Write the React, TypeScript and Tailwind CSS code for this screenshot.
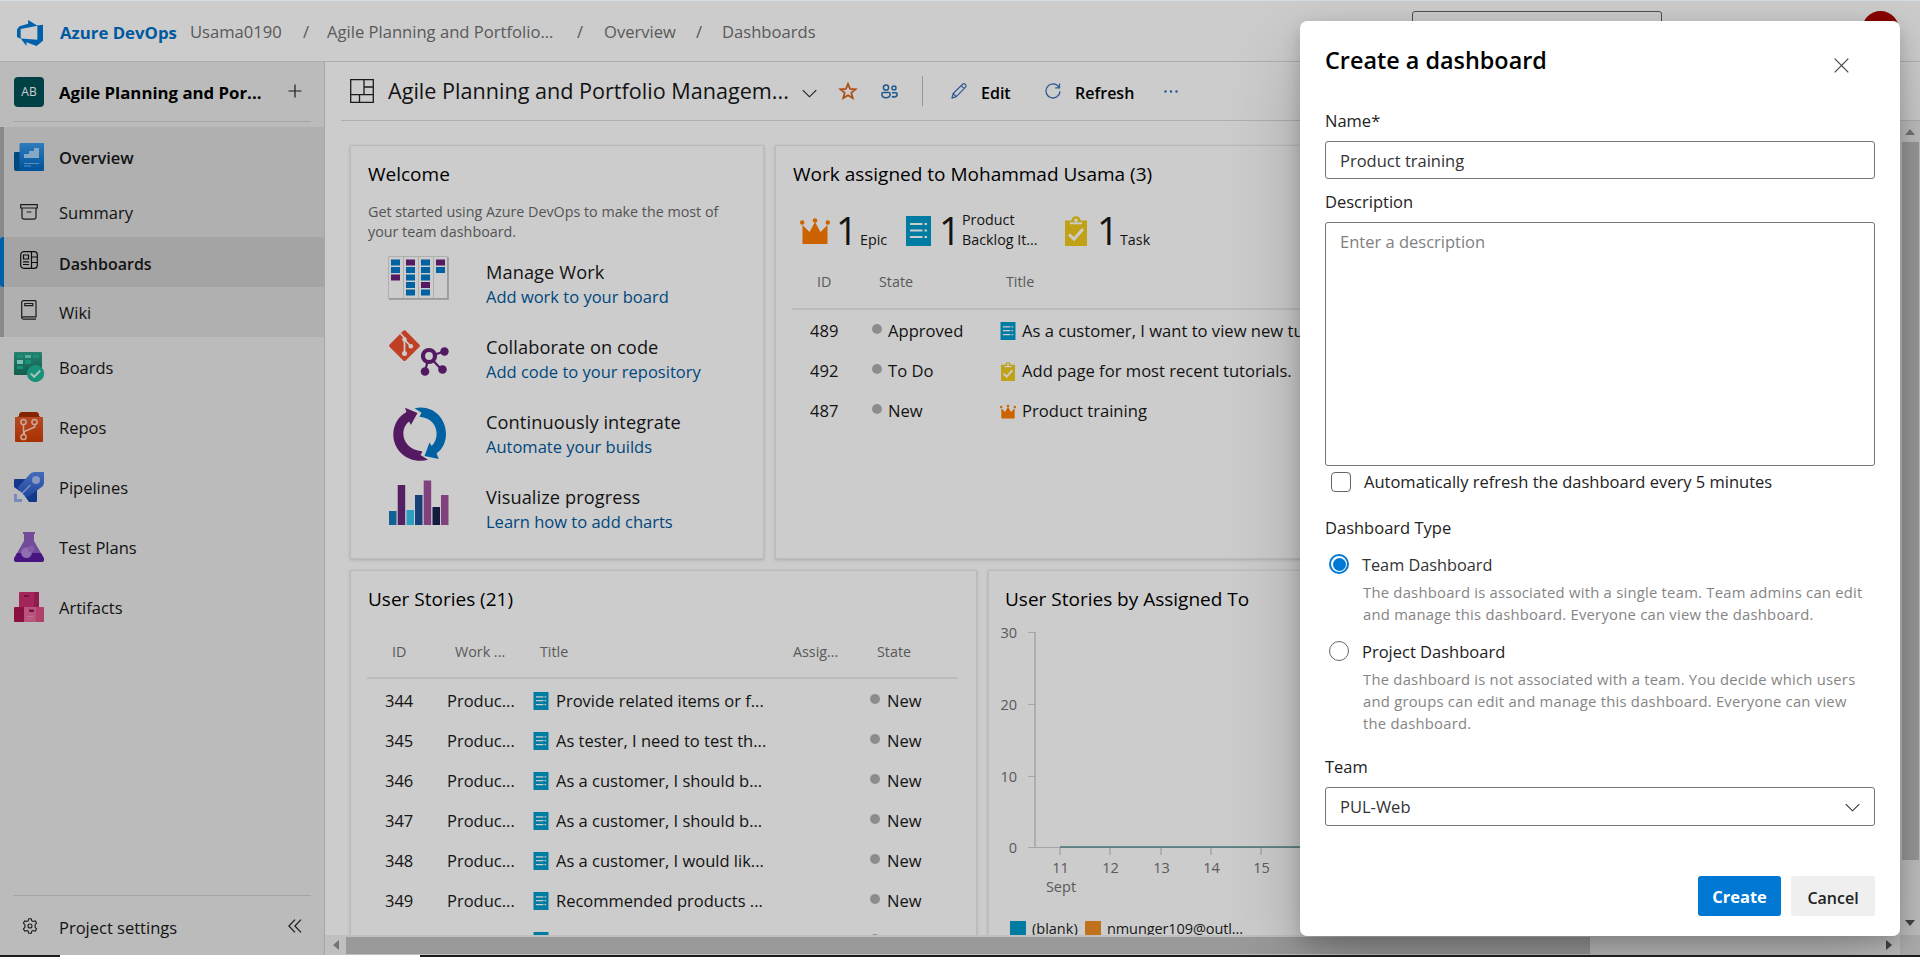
import React from "react";

type IconProps = { className?: string };

const Logo = () => (
  <svg viewBox="1 1 14 14" className="h-[26px] w-[26px] fill-[#0078d4]">
    <path d="M15 3.622v8.512L11.5 15l-5.425-1.975v1.958L3.004 10.97l8.951.7V4.005L15 3.622zm-2.984.428L6.994 1v2.001L2.382 4.356 1 6.13v4.029l1.978.873V5.869l9.038-1.818z" />
  </svg>
);

const PlusIcon = () => (
  <svg viewBox="0 0 14 14" className="-mt-[2px] h-[14px] w-[14px] stroke-[#222]" fill="none" strokeWidth="1.2">
    <path d="M7 .5v13M.5 7h13" />
  </svg>
);

const OverviewIcon = () => (
  <svg viewBox="0 0 30 28" className="h-7 w-[30px]">
    <defs>
      <linearGradient id="ov" x1="0" y1="0" x2="0" y2="1">
        <stop offset="0" stopColor="#3a9bef" />
        <stop offset="1" stopColor="#0066c0" />
      </linearGradient>
    </defs>
    <path d="M1 9h5v19H2a2 2 0 0 1-2-2V10a1 1 0 0 1 1-1z" fill="#005ba1" />
    <path d="M6 0h23a1 1 0 0 1 1 1v26a1 1 0 0 1-1 1H4c1 0 1.500-.7 1.500-1.500V1z" fill="url(#ov)" />
    <path d="M10 15v-4h5V8h5V5h5v10z" fill="#a9d3f5" />
    <path d="M10 20.500h15M10 23h7" stroke="#6db5ef" strokeWidth="1.200" />
  </svg>
);

const BoardsIcon = () => (
  <svg viewBox="0 0 30 30" className="h-[30px] w-[30px]">
    <defs>
      <linearGradient id="bd" x1="0" y1="0" x2="0" y2="1">
        <stop offset="0" stopColor="#2fa28b" />
        <stop offset="1" stopColor="#197560" />
      </linearGradient>
    </defs>
    <rect width="28" height="23" rx="1" fill="url(#bd)" />
    <path d="M3 3h6v3H3zM19 3h6v3h-6zM11 8h6v4h-6zM3 14h6v3H3z" fill="#22b596" />
    <path d="M11 3h6v3h-6z" fill="#68dcc5" />
    <path d="M3 8h6v4H3z" fill="#98f2df" />
    <circle cx="21.500" cy="21.500" r="8.600" fill="#1fb698" />
    <path d="M16.800 21.500l3.400 3.300 6-6" fill="none" stroke="#c8f5ea" strokeWidth="2.200" />
  </svg>
);

const ReposIcon = () => (
  <svg viewBox="0 0 30 30" className="h-[30px] w-[30px]">
    <defs>
      <linearGradient id="rp" x1="0" y1="0" x2="0" y2="1">
        <stop offset="0" stopColor="#e55b2c" />
        <stop offset="1" stopColor="#d33c00" />
      </linearGradient>
    </defs>
    <path d="M7 0h16l2 2v2l3 2H2l3-2V2z" fill="#a52f00" />
    <path d="M1 5h28v24a1 1 0 0 1-1 1H2a1 1 0 0 1-1-1z" fill="url(#rp)" />
    <g fill="none" stroke="#ffd0bd" strokeWidth="1.500">
      <circle cx="9.500" cy="10" r="2.600" />
      <circle cx="20.500" cy="10" r="2.600" />
      <circle cx="9.500" cy="25" r="2.600" />
      <path d="M9.500 12.600v9.800M20.800 12.600v2.400l-10.500 4.500v3" />
    </g>
  </svg>
);

const PipelinesIcon = () => (
  <svg viewBox="0 0 30 30" className="h-[30px] w-[30px]">
    <defs>
      <linearGradient id="pl" x1="0" y1="0" x2="0" y2="1">
        <stop offset="0" stopColor="#5687e8" />
        <stop offset="1" stopColor="#2a59c4" />
      </linearGradient>
    </defs>
    <path d="M0 8q0-1 1-1h12L7 20l-7-5zM23 14v15q0 1-1 1h-7l-5-7z" fill="#1746ac" />
    <path d="M17 1l3-1h10v11l-1 3-15 11-4-1-5-5-1-4z" fill="url(#pl)" />
    <circle cx="22" cy="8" r="4" fill="#a9bff3" />
    <path d="M7 22.500l9.500-9.500" stroke="#9db8f3" strokeWidth="1.500" />
    <path d="M0 22h3v5h5v3H0z" fill="#93aee8" />
    <path d="M6 19l5 5-2 2-2-1-1 2-3-3 2-1-1-2z" fill="#e4e9f5" />
  </svg>
);

const TestPlansIcon = () => (
  <svg viewBox="0 0 30 30" className="h-[30px] w-[30px]">
    <path d="M9 0h12v2h-1v7l3.500 6 6 10.500C31 28 30 30 27.500 30h-25C0 30-1 28 .5 25.500L6.500 15 10 9V2H9V0z" fill="#8f60c0" />
    <path d="M3 21h24l2.700 5c1 2.200 0 4-2.200 4h-25C.3 30-.7 28.200.3 26z" fill="#5b1ba0" />
    <circle cx="12.500" cy="20.700" r="5.300" fill="#b58bdc" />
    <circle cx="17" cy="17" r="3.200" fill="#a373d0" />
  </svg>
);

const ArtifactsIcon = () => (
  <svg viewBox="0 0 30 30" className="h-[30px] w-[30px]">
    <path d="M5 1q0-1 1-1h18q1 0 1 1v14H5z" fill="#cb3070" />
    <path d="M20 0h4q1 0 1 1v14h-5z" fill="#b32460" />
    <path d="M10 3h5v2h-5z" fill="#94154c" />
    <path d="M0 16q0-1 1-1h9v15H1q-1 0-1-1z" fill="#b0154f" />
    <path d="M10 15h19q1 0 1 1v13q0 1-1 1H10z" fill="#e8699c" />
    <path d="M22 15h7q1 0 1 1v13q0 1-1 1h-7z" fill="#dd5289" />
    <path d="M5 17.500h4.500v2.500H5zM15 17.500h5v2.500h-5z" fill="#9c1550" />
    <path d="M12.500 24.500h7M12.500 27h5" stroke="#f08cb4" />
  </svg>
);

const SummaryIcon = () => (
  <svg viewBox="0 0 18 16" className="h-4 w-[18px] stroke-[#222]" fill="none" strokeWidth="1.2">
    <path d="M.7.7h16.600v3.300H.7zM2 4v9q0 2.200 2.200 2.200h9.600q2.200 0 2.200-2.200V4M6.700 8h4.600" />
  </svg>
);

const DashboardsIcon = () => (
  <svg viewBox="0 0 18 18" className="-mt-1 h-[18px] w-[18px] stroke-[#111]" fill="none" strokeWidth="1.2">
    <rect x=".7" y=".7" width="16.600" height="16.600" rx="3" />
    <path d="M11.500.7v16.600M11.500 6h6M11.500 11.500h6M3.500 4h5v4h-5zM3 10.800h6M3 13.500h6" />
  </svg>
);

const WikiIcon = () => (
  <svg viewBox="0 0 18 20" className="-mt-1 h-5 w-[18px] stroke-[#222]" fill="none" strokeWidth="1.2">
    <path d="M16 .7H3.500q-1.800 0-1.800 1.800v14.800q0 1.800 1.800 1.800H16M16 .7v16.200H3.500q-1.800 0-1.800 1.200M4.800 3.500h8v2.200h-8z" />
  </svg>
);

const GearIcon = () => (
  <svg viewBox="0 0 16 16" className="h-4 w-4 stroke-[#222]" fill="none" strokeWidth="1.1" strokeLinejoin="round">
    <circle cx="8" cy="8" r="2" />
    <path d="M6.700.7h2.600l.4 2 1.500.8 2-.7 1.400 2.300-1.500 1.500v2.800l1.500 1.500-1.400 2.300-2-.7-1.500.8-.4 2H6.700l-.4-2-1.500-.8-2 .7-1.400-2.300 1.500-1.500V6.600L1.400 5.100l1.400-2.300 2 .7 1.500-.8z" />
  </svg>
);

const CollapseIcon = () => (
  <svg viewBox="0 0 14 14" className="h-[14px] w-[14px] stroke-[#222]" fill="none" strokeWidth="1.2">
    <path d="M7 .7L.9 7 7 13.300M13 .7L6.900 7l6.100 6.300" />
  </svg>
);

const GridIcon = () => (
  <svg viewBox="0 0 24 24" className="h-6 w-6 stroke-[#222]" fill="none" strokeWidth="1.3">
    <path d="M.7.7h22.600v22.600H.7zM14 .7v15M.7 15.700h22.600M14 8h9.300M9.500 15.700v7.600" />
  </svg>
);

const ChevronDown = ({ className }: IconProps) => (
  <svg viewBox="0 0 16 9" className={className} fill="none" stroke="currentColor" strokeWidth="1.2">
    <path d="M.8.8L8 8 15.200.8" />
  </svg>
);

const StarIcon = () => (
  <svg viewBox="0 0 20 19" className="h-[18px] w-5 stroke-[#d9661f]" fill="none" strokeWidth="1.9" strokeLinejoin="miter">
    <path d="M10 2l2.200 5.300 5.800.4-4.500 3.700 1.500 5.600L10 14l-5 3 1.500-5.600L2 7.700l5.800-.4z" />
  </svg>
);

const UsersIcon = () => (
  <svg viewBox="0 0 17 15" className="h-[15px] w-[17px] stroke-[#2a6fb0]" fill="none" strokeWidth="1.5">
    <circle cx="5" cy="3.500" r="2.600" />
    <circle cx="13" cy="4" r="2" />
    <path d="M2.200 8.500h5.600q1.400 0 1.400 1.500 0 3.700-4.200 3.700T.8 10q0-1.500 1.400-1.500zM11 8.700h4q1.200 0 1.200 1.300 0 2.800-3 3-1.400 0-2.400-.5" />
  </svg>
);

const PencilIcon = () => (
  <svg viewBox="0 0 16 16" className="h-4 w-4 stroke-[#3b70b8]" fill="none" strokeWidth="1.2" strokeLinejoin="round">
    <path d="M.9 15.100l1.300-4.600L11.600 1.200q1.500-1.100 2.700.1t.2 2.800L5.300 13.600zM10.200 2.600l3 3M2.200 10.500l3.100 3.100" />
  </svg>
);

const RefreshIcon = () => (
  <svg viewBox="0 0 16 16" className="h-4 w-4 stroke-[#3b70b8]" fill="none" strokeWidth="1.3">
    <path d="M15 8.300A7 7 0 1 1 13.800 4M14.500.5v4.300h-4.300" />
  </svg>
);

const MoreIcon = () => (
  <svg viewBox="0 0 14 3" className="h-[3px] w-[14px] fill-[#2a6fc0]">
    <circle cx="1.500" cy="1.500" r="1.200" />
    <circle cx="7" cy="1.500" r="1.200" />
    <circle cx="12.500" cy="1.500" r="1.200" />
  </svg>
);

const Crown = ({ className }: IconProps) => (
  <svg viewBox="0 0 30 26" className={className} fill="#ff7b00">
    <path d="M2.500 26V7l7 7L15 4l5.500 10 7-7v19z" />
    <circle cx="15" cy="2.500" r="2.300" />
    <circle cx="2.200" cy="4.500" r="2.200" />
    <circle cx="27.800" cy="4.500" r="2.200" />
  </svg>
);

const Backlog = ({ className }: IconProps) => (
  <svg viewBox="0 0 25 30" className={className}>
    <path d="M0 0h25v30H0z" fill="#009ccc" />
    <path d="M4 8h12.500M4 14.500h12.500M4 21h12.500M18.500 8h2.500M18.500 14.500h2.500M18.500 21h2.500" stroke="#fff" strokeWidth="2" />
  </svg>
);

const Clipboard = ({ className }: IconProps) => (
  <svg viewBox="0 0 22 30" className={className}>
    <path d="M0 4.500h6.500Q7 .3 11 .3t4.500 4.200H22V30H0z" fill="#f2cb1d" />
    <path d="M5 7.300h12" stroke="#fff" strokeWidth="2" />
    <circle cx="11" cy="4.300" r="1.800" fill="#fff" />
    <path d="M4 18.500l5 4.700L18 13" fill="none" stroke="#fff" strokeWidth="3" />
  </svg>
);

const kanban: [number, string[]][] = [
  [3, ["b", "b", "p"]],
  [18, ["p", "b", "b", "b", "b"]],
  [33, ["b", "b", "b", "p", "b"]],
  [48, ["p", "b"]],
];

const KanbanArt = () => (
  <svg viewBox="0 0 61 44" className="h-11 w-[61px] -translate-y-[5px]">
    <path d="M.5.5h59v42H.5zM15.500.5v42M30.500.5v42M45.500.5v42" fill="none" stroke="#dadada" />
    <path d="M60 1v42H1" fill="none" stroke="#bbb" strokeWidth="1.500" />
    {kanban.map(([x, cells]) =>
      cells.map((c, i) => (
        <rect key={`${x}-${i}`} x={x} y={3.500 + i * 7.500} width="9" height="6" fill={c === "b" ? "#007acc" : "#68217a"} />
      ))
    )}
  </svg>
);

const GitArt = () => (
  <svg viewBox="0 0 60 46" className="h-[46px] w-[60px] -translate-y-[5px]">
    <path d="M14.300.8q1.200-1.100 2.400 0l13.600 13.700q1.200 1.200 0 2.400L16.700 30.500q-1.200 1.100-2.400 0L.7 16.900q-1.200-1.200 0-2.400z" fill="#f05030" />
    <path d="M11.500 3.500l4 4.500v16M15.500 9.500l6 6.500" stroke="#fff" strokeWidth="1.700" fill="none" />
    <g fill="#fff">
      <circle cx="15.500" cy="9.500" r="2.300" />
      <circle cx="15.500" cy="23.500" r="2.500" />
      <circle cx="21.800" cy="16.200" r="2.300" />
    </g>
    <g stroke="#68217a" fill="none">
      <circle cx="40" cy="26" r="6" strokeWidth="4.200" />
      <path d="M46 24.500l9-3M44.500 31l8 8.500M38.500 32L36 41" strokeWidth="2.200" />
    </g>
    <g fill="#68217a">
      <circle cx="55.500" cy="21.500" r="4.200" />
      <circle cx="53.500" cy="39.500" r="4.300" />
      <circle cx="36" cy="41.500" r="4.300" />
    </g>
  </svg>
);

const CycleArt = () => (
  <svg viewBox="0 0 54 54" className="h-[54px] w-[54px] translate-x-px translate-y-px">
    <path d="M12 .8L24.500 6 17.800 18l-1.600-3.600C6.500 21 7.500 42.500 29.500 44.500L27.500 48l7.500 4.800C17 57.500 0 45 .3 27 .5 17 6 9 13.500 5z" fill="#68217a" />
    <path d="M21.500 1.200C38-3 53 9.500 53 27c0 8.500-3.800 15.500-9.500 19.500l2.300 5.500L31.500 49l5-13.500 2.200 3.500C47 31.500 46 11.500 26.500 9.800l2-4z" fill="#007acc" />
  </svg>
);

const BarsArt = () => (
  <svg viewBox="0 0 60 45" className="h-[45px] w-[60px] -translate-y-[5px]">
    <path d="M0 31h7.500v14H0z" fill="#1678bd" />
    <path d="M8.700 5h7.500v40H8.700z" fill="#68297e" />
    <path d="M17.500 30H25v15h-7.500z" fill="#37c6ee" />
    <path d="M26 15h7.500v30H26z" fill="#1b5099" />
    <path d="M34.700.5h7.500V45h-7.500z" fill="#a1529c" />
    <path d="M43.500 27H51v18h-7.500z" fill="#18234c" />
    <path d="M52 15h7.500v30H52z" fill="#a1529c" />
  </svg>
);

const nav = [
  { label: "Boards", icon: <BoardsIcon /> },
  { label: "Repos", icon: <ReposIcon /> },
  { label: "Pipelines", icon: <PipelinesIcon /> },
  { label: "Test Plans", icon: <TestPlansIcon /> },
  { label: "Artifacts", icon: <ArtifactsIcon /> },
];

function Header() {
  return (
    <header className="flex h-[62px] shrink-0 items-center border-b border-[#dadada] pl-[17px] pt-[4px] text-[16.6px] text-[#717171]">
      <Logo />
      <span className="ml-[17px] w-[130px] whitespace-nowrap text-[16.8px] font-bold text-[#0070c8]">Azure DevOps</span>
      <span className="w-[113px]">Usama0190</span>
      <span className="w-[24px]">/</span>
      <span className="w-[250px] whitespace-nowrap">Agile Planning and Portfolio...</span>
      <span className="w-[27px]">/</span>
      <span className="w-[92px]">Overview</span>
      <span className="w-[26px]">/</span>
      <span>Dashboards</span>
      <div className="ml-auto mr-[200px] h-10 w-[250px] translate-y-[-2px] rounded-[3px] border border-[#666]" />
      <div className="mr-[21px] h-[37px] w-[37px] translate-y-[-3px] rounded-full bg-[#ac0000]" />
    </header>
  );
}

function Sidebar() {
  return (
    <aside className="flex w-[325px] shrink-0 flex-col border-r border-[#d0d0d0] bg-[#eaeaea] text-[16.5px] text-[#181818]">
      <div className="mx-[13px] flex h-[60px] items-center border-b border-[#cfcfcf] pl-px">
        <div className="flex h-[30px] w-[30px] items-center justify-center rounded-[4px] bg-[#005257] text-[12px] text-white">AB</div>
        <span className="ml-[15px] mt-[3px] w-[229px] whitespace-nowrap text-[16.8px] font-bold text-black">Agile Planning and Por...</span>
        <PlusIcon />
      </div>
      <div className="mt-[5px] flex h-[210px] shrink-0 flex-col border-l-4 border-[#acacac] bg-[#dcdcdc]">
        <div className="flex h-[60px] items-center pl-[10px] font-semibold">
          <OverviewIcon />
          <span className="ml-[15px] mt-[3px]">Overview</span>
        </div>
        <div className="flex h-[50px] items-center pl-4">
          <SummaryIcon />
          <span className="ml-[21px] mt-[3px]">Summary</span>
        </div>
        <div className="-ml-1 flex h-[50px] items-center rounded-[3px] border-l-4 border-[#0078d4] bg-[#cecece] pl-4 text-[16px] font-semibold">
          <DashboardsIcon />
          <span className="ml-[21px] mt-[3px]">Dashboards</span>
        </div>
        <div className="flex h-[50px] items-center pl-4">
          <WikiIcon />
          <span className="ml-[21px] mt-[3px]">Wiki</span>
        </div>
      </div>
      {nav.map((n) => (
        <div key={n.label} className="flex h-[60px] shrink-0 items-center pl-[14px]">
          {n.icon}
          <span className="ml-[15px] mt-[3px]">{n.label}</span>
        </div>
      ))}
      <div className="mx-[13px] mt-auto flex h-[60px] items-center border-t border-[#cfcfcf] pl-[9px]">
        <GearIcon />
        <span className="ml-[21px] mt-[5px] w-[229px]">Project settings</span>
        <CollapseIcon />
      </div>
    </aside>
  );
}

function Toolbar() {
  return (
    <div className="ml-4 flex h-[59px] shrink-0 items-center border-b border-[#dadada] pl-[9px] text-[16px]">
      <GridIcon />
      <span className="ml-[14px] w-[414px] whitespace-nowrap text-[21.6px] text-[#181818]">Agile Planning and Portfolio Managem...</span>
      <ChevronDown className="mt-1 h-[9px] w-[15px] text-[#222]" />
      <span className="ml-[21px]"><StarIcon /></span>
      <span className="ml-[23px]"><UsersIcon /></span>
      <div className="ml-[24px] h-[30px] w-px bg-[#bcbcbc]" />
      <span className="ml-[28px]"><PencilIcon /></span>
      <span className="ml-[14px] mt-[3px] w-[64px] font-semibold">Edit</span>
      <RefreshIcon />
      <span className="ml-[14px] mt-[3px] w-[89px] font-semibold">Refresh</span>
      <MoreIcon />
    </div>
  );
}

const card = "shrink-0 border border-[#eaeaea] bg-white shadow-[0_1px_3px_rgba(0,0,0,0.18)]";

const steps = [
  { title: "Manage Work", link: "Add work to your board", art: <KanbanArt /> },
  { title: "Collaborate on code", link: "Add code to your repository", art: <GitArt /> },
  { title: "Continuously integrate", link: "Automate your builds", art: <CycleArt /> },
  { title: "Visualize progress", link: "Learn how to add charts", art: <BarsArt /> },
];

function Welcome() {
  return (
    <section className={`${card} flex h-[414px] w-[414px] flex-col pl-[17px] pt-[14px]`}>
      <h2 className="h-[42px] text-[19px] leading-[28px] text-black">Welcome</h2>
      <p className="mb-[3px] w-[374px] text-[14.3px] leading-5 text-[#6a6a6a]">
        Get started using Azure DevOps to make the most of your team dashboard.
      </p>
      {steps.map((s) => (
        <div key={s.title} className="flex h-[75px] shrink-0 items-center">
          <div className="flex w-[101px] justify-center">{s.art}</div>
          <div className="ml-[17px] mt-[2px]">
            <div className="text-[18.2px] leading-[26px] tracking-[0.1px] text-[#181818]">{s.title}</div>
            <div className="text-[16.5px] leading-[24px] text-[#005a9e]">{s.link}</div>
          </div>
        </div>
      ))}
    </section>
  );
}

const assigned = [
  { id: "489", state: "Approved", title: "As a customer, I want to view new tutorials", icon: <Backlog className="h-[18px] w-4" /> },
  { id: "492", state: "To Do", title: "Add page for most recent tutorials.", icon: <Clipboard className="h-[19px] w-[14px]" /> },
  { id: "487", state: "New", title: "Product training", icon: <Crown className="h-[15px] w-[17px]" /> },
];

function Assigned() {
  return (
    <section className={`${card} h-[414px] w-[826px] pl-4 pt-[14px]`}>
      <h2 className="h-[28px] pl-px text-[19px] leading-[28px] text-black">Work assigned to Mohammad Usama (3)</h2>
      <div className="mt-[26px] flex h-[34px] items-end pl-2 text-[14.300px] leading-5 text-[#181818]">
        <Crown className="mb-[4px] h-[26px] w-[30px]" />
        <span className="ml-[6px] w-[24px] text-[38px] leading-[36px]">1</span>
        <span className="-mb-[2px] w-[46px]">Epic</span>
        <Backlog className="mb-[2px] h-[30px] w-[25px]" />
        <span className="ml-[8px] w-[23px] text-[38px] leading-[36px]">1</span>
        <span className="-mb-[2px] w-[103px]">Product<br />Backlog It...</span>
        <Clipboard className="mb-[2px] h-[30px] w-[22px]" />
        <span className="ml-[10px] w-[23px] text-[38px] leading-[36px]">1</span>
        <span className="-mb-[2px]">Task</span>
      </div>
      <div className="mt-[22px] flex h-[40px] border-b-2 border-[#eaeaea] pl-[25px] text-[14.300px] leading-6 text-[#717171]">
        <span className="w-[62px]">ID</span>
        <span className="w-[127px]">State</span>
        <span>Title</span>
      </div>
      <div className="pt-px text-[16.600px] text-[#181818]">
        {assigned.map((r) => (
          <div key={r.id} className="flex h-10 items-center whitespace-nowrap pl-[18px]">
            <span className="w-[62px]">{r.id}</span>
            <span className="mb-1 h-[10px] w-[10px] rounded-full bg-[#b0b0b0]" />
            <span className="ml-[6px] w-[112px]">{r.state}</span>
            <span className="flex w-[16px] justify-center">{r.icon}</span>
            <span className="ml-[6px]">{r.title}</span>
          </div>
        ))}
      </div>
    </section>
  );
}

const stories = [
  ["344", "Provide related items or f..."],
  ["345", "As tester, I need to test th..."],
  ["346", "As a customer, I should b..."],
  ["347", "As a customer, I should b..."],
  ["348", "As a customer, I would lik..."],
  ["349", "Recommended products ..."],
  ["350", "As a customer, I would lik..."],
];

function Stories() {
  return (
    <section className={`${card} h-[520px] w-[627px] pl-4 pr-[18px] pt-[14px]`}>
      <h2 className="h-[53px] pl-px text-[19px] leading-[28px] text-black">User Stories (21)</h2>
      <div className="flex h-[41px] border-b-2 border-[#eaeaea] pl-[25px] text-[14.300px] leading-7 text-[#717171]">
        <span className="w-[63px]">ID</span>
        <span className="w-[85px]">Work ...</span>
        <span className="w-[253px]">Title</span>
        <span className="w-[84px]">Assig...</span>
        <span>State</span>
      </div>
      <div className="pt-[2px] text-[16.5px] text-[#181818]">
        {stories.map(([id, title]) => (
          <div key={id} className="flex h-10 items-center whitespace-nowrap pl-[18px]">
            <span className="w-[62px]">{id}</span>
            <span className="w-[86px]">Produc...</span>
            <Backlog className="h-[18px] w-4" />
            <span className="ml-[7px] w-[314px]">{title}</span>
            <span className="mb-1 h-[10px] w-[10px] rounded-full bg-[#b0b0b0]" />
            <span className="ml-[7px]">New</span>
          </div>
        ))}
      </div>
    </section>
  );
}

const yTicks: [string, number][] = [["30", 17], ["20", 89], ["10", 161], ["0", 232]];
const xTicks: [string, number][] = [["11", 71], ["12", 121], ["13", 172], ["14", 222], ["15", 272], ["16", 323]];

function Chart() {
  return (
    <section className={`${card} h-[520px] w-[613px] pt-[14px]`}>
      <h2 className="h-[28px] pl-4 text-[19px] leading-[28px] text-black">User Stories by Assigned To</h2>
      <svg width="600" height="282" className="mt-[2px] block fill-[#717171] text-[14.5px]">
        {yTicks.map(([t, y]) => (
          <g key={t}>
            <text x="28" y={y + 5.500} textAnchor="end">{t}</text>
            <path d={`M39 ${y + 0.500}h8`} stroke="#d0d0d0" />
          </g>
        ))}
        <path d="M46 17v216" stroke="#cfcfcf" strokeWidth="1.500" />
        <path d="M46 232.500H600" stroke="#cfcfcf" />
        <path d="M71 232H600" stroke="#5a9095" strokeWidth="1.300" />
        {xTicks.map(([t, x]) => (
          <g key={t}>
            <path d={`M${x} 233v7`} stroke="#cfcfcf" strokeWidth="1.500" />
            <text x={x + 0.500} y="258" textAnchor="middle">{t}</text>
          </g>
        ))}
        <text x="72" y="277" textAnchor="middle">Sept</text>
      </svg>
      <div className="mt-[22px] flex items-center pl-[21px] text-[14.5px] leading-5 text-[#222]">
        <span className="h-4 w-4 bg-[#009ccc]" />
        <span className="ml-[6px] w-[53px]">(blank)</span>
        <span className="h-4 w-4 bg-[#f28c22]" />
        <span className="ml-[6px] tracking-[-0.1px]">nmunger109@outl...</span>
      </div>
    </section>
  );
}

const Arrow = ({ d }: { d: string }) => (
  <svg viewBox="0 0 10 10" className="h-[10px] w-[10px] fill-[#555]"><path d={d} /></svg>
);

function Board() {
  return (
    <div className="grid min-h-0 flex-1 grid-cols-[1fr_20px] grid-rows-[minmax(0,1fr)_20px]">
      <div className="flex min-w-0 flex-col gap-[11px] overflow-hidden pl-[25px] pt-[24px]">
        <div className="flex gap-[11px]">
          <Welcome />
          <Assigned />
        </div>
        <div className="flex gap-[11px]">
          <Stories />
          <Chart />
        </div>
      </div>
      <div className="flex flex-col items-center bg-[#f1f1f1]">
        <div className="flex h-[21px] shrink-0 items-center opacity-60"><Arrow d="M0 8l5-6 5 6z" /></div>
        <div className="h-[718px] w-[17px] bg-[#c1c1c1]" />
        <div className="mt-auto flex h-[24px] items-center"><Arrow d="M0 2l5 6 5-6z" /></div>
      </div>
      <div className="flex items-center bg-[#f1f1f1]">
        <div className="flex w-[21px] shrink-0 justify-center opacity-60"><Arrow d="M8 0L2 5l6 5z" /></div>
        <div className="h-[17px] w-[1244px] bg-[#c1c1c1]" />
        <div className="ml-auto mr-[6px]"><Arrow d="M2 0l6 5-6 5z" /></div>
      </div>
      <div className="bg-[#dcdcdc]" />
    </div>
  );
}

const label = "text-[16.5px] leading-6 text-[#222]";
const field = "rounded-[3px] border border-[#757575] px-[14px] text-[16.5px] text-[#333]";

function Dialog() {
  return (
    <div role="dialog" className="absolute left-[1300px] top-[21px] flex h-[915px] w-[600px] flex-col rounded-[7px] bg-white px-[25px] shadow-[0_32px_72px_rgba(0,0,0,0.22),0_6px_18px_rgba(0,0,0,0.18)]">
      <div className="flex h-[88px] items-start justify-between">
        <h1 className="pt-[21px] text-[23.4px] font-semibold leading-[36px] text-black">Create a dashboard</h1>
        <svg viewBox="0 0 15 15" className="mr-[26px] mt-[37px] h-[15px] w-[15px]" fill="none" stroke="#444" strokeWidth="1.2">
          <path d="M.7.7l13.600 13.600M14.300.7L.7 14.300" />
        </svg>
      </div>
      <div className={`${label} h-8`}>Name*</div>
      <div className={`${field} flex h-[38px] items-center pt-[2px]`}>Product training</div>
      <div className={`${label} mt-[11px] h-[32px]`}>Description</div>
      <div className={`${field} h-[244px] pt-[7px] leading-6 !text-[#808080]`}>Enter a description</div>
      <div className="flex h-[32px] items-center pl-[6px]">
        <span className="h-5 w-5 rounded-[4px] border border-[#666]" />
        <span className="ml-[13px] text-[16.5px] text-[#222]">Automatically refresh the dashboard every 5 minutes</span>
      </div>
      <div className={`${label} mt-[18px] h-[36px]`}>Dashboard Type</div>
      <div className="flex h-[24px] items-center pl-1">
        <span className="flex h-5 w-5 items-center justify-center rounded-full border-2 border-[#0078d4]">
          <span className="h-[13px] w-[13px] rounded-full bg-[#0078d4]" />
        </span>
        <span className="ml-[13px] mt-[2px] text-[16.3px] text-[#333]">Team Dashboard</span>
      </div>
      <p className="ml-[38px] mt-[5px] whitespace-nowrap text-[14.8px] leading-[22px] tracking-[0.24px] text-[#858585]">
        The dashboard is associated with a single team. Team admins can edit<br />and manage this dashboard. Everyone can view the dashboard.
      </p>
      <div className="mt-[14px] flex h-[24px] items-center pl-1">
        <span className="h-5 w-5 rounded-full border border-[#666]" />
        <span className="ml-[13px] mt-[2px] text-[16.5px] text-[#222]">Project Dashboard</span>
      </div>
      <p className="ml-[38px] mt-[5px] whitespace-nowrap text-[14.8px] leading-[22px] tracking-[0.24px] text-[#858585]">
        The dashboard is not associated with a team. You decide which users<br />and groups can edit and manage this dashboard. Everyone can view<br />the dashboard.
      </p>
      <div className={`${label} mt-[21px] h-[32px]`}>Team</div>
      <div className={`${field} flex h-[39px] items-center justify-between pt-[2px]`}>
        PUL-Web
        <ChevronDown className="h-[9px] w-[15px] text-[#333]" />
      </div>
      <div className="mt-[50px] flex justify-end gap-[10px] text-[16.5px]">
        <button className="h-10 w-[83px] rounded-[3px] bg-[#0078d4] pt-[3px] font-bold text-white">Create</button>
        <button className="h-10 w-[84px] rounded-[3px] bg-[#efefef] pt-[3px] text-[16px] font-semibold text-[#222]">Cancel</button>
      </div>
    </div>
  );
}

export default function App() {
  return (
    <div className="relative flex h-[957px] w-[1920px] flex-col overflow-hidden bg-white font-['Open_Sans','Noto_Sans',sans-serif]">
      <div className="flex h-[955px] flex-col overflow-hidden">
        <Header />
        <div className="flex min-h-0 flex-1">
          <Sidebar />
          <main className="flex min-w-0 flex-1 flex-col">
            <Toolbar />
            <Board />
          </main>
        </div>
      </div>
      <div className="absolute inset-x-0 top-0 h-[955px] border-t border-[#d3dde3] bg-black/20" />
      <Dialog />
      <div className="relative flex h-[2px] bg-[#1c1c1e]">
        <div className="ml-[60px] h-full w-[360px] bg-white" />
      </div>
    </div>
  );
}
